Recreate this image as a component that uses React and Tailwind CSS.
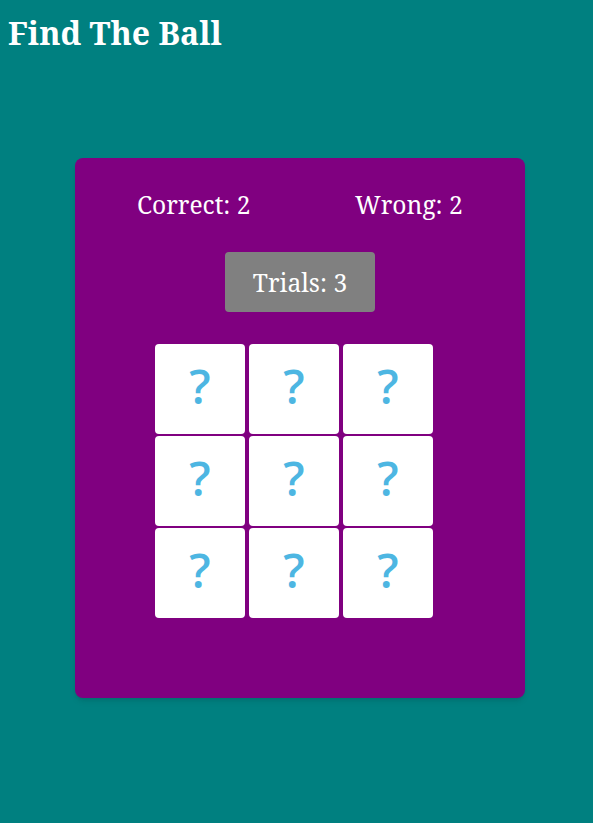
export default function App() {
  const serif = { fontFamily: '"Noto Serif", "DejaVu Serif", "Liberation Serif", serif' };
  return (
    <div className="min-h-[823px] bg-[#008080] overflow-hidden" style={serif}>
      <h1 className="text-[32px] font-bold text-white leading-[37px] px-2 pt-[14px] m-0">Find The Ball</h1>
      <div className="ml-[75px] mt-[107px] w-[450px] h-[540px] bg-[#800080] rounded-lg shadow-md pt-[32px]">
        <div className="flex text-white text-[24.6px] leading-[30px]">
          <div className="ml-[62px] w-[118px] whitespace-nowrap">Correct: 2</div>
          <div className="ml-[100px] whitespace-nowrap">Wrong: 2</div>
        </div>
        <div className="mt-[32px] flex justify-center">
          <div className="w-[150px] h-[60px] bg-[#808080] rounded flex items-center justify-center text-white text-[24.6px] pt-[3px]">Trials: 3</div>
        </div>
        <div className="mt-[32px] ml-[80px] grid grid-cols-[90px_90px_90px] gap-x-[4px] gap-y-[2px] w-[278px]">
          {Array.from({ length: 9 }).map((_, i) => (
            <div key={i} className="w-[90px] h-[90px] bg-white rounded flex items-center justify-center">
              <span className="text-[47px] font-semibold text-[#4db6e2] leading-none mb-[5px]" style={{ fontFamily: '"Open Sans", "Noto Sans", sans-serif' }}>?</span>
            </div>
          ))}
        </div>
      </div>
    </div>
  );
}
